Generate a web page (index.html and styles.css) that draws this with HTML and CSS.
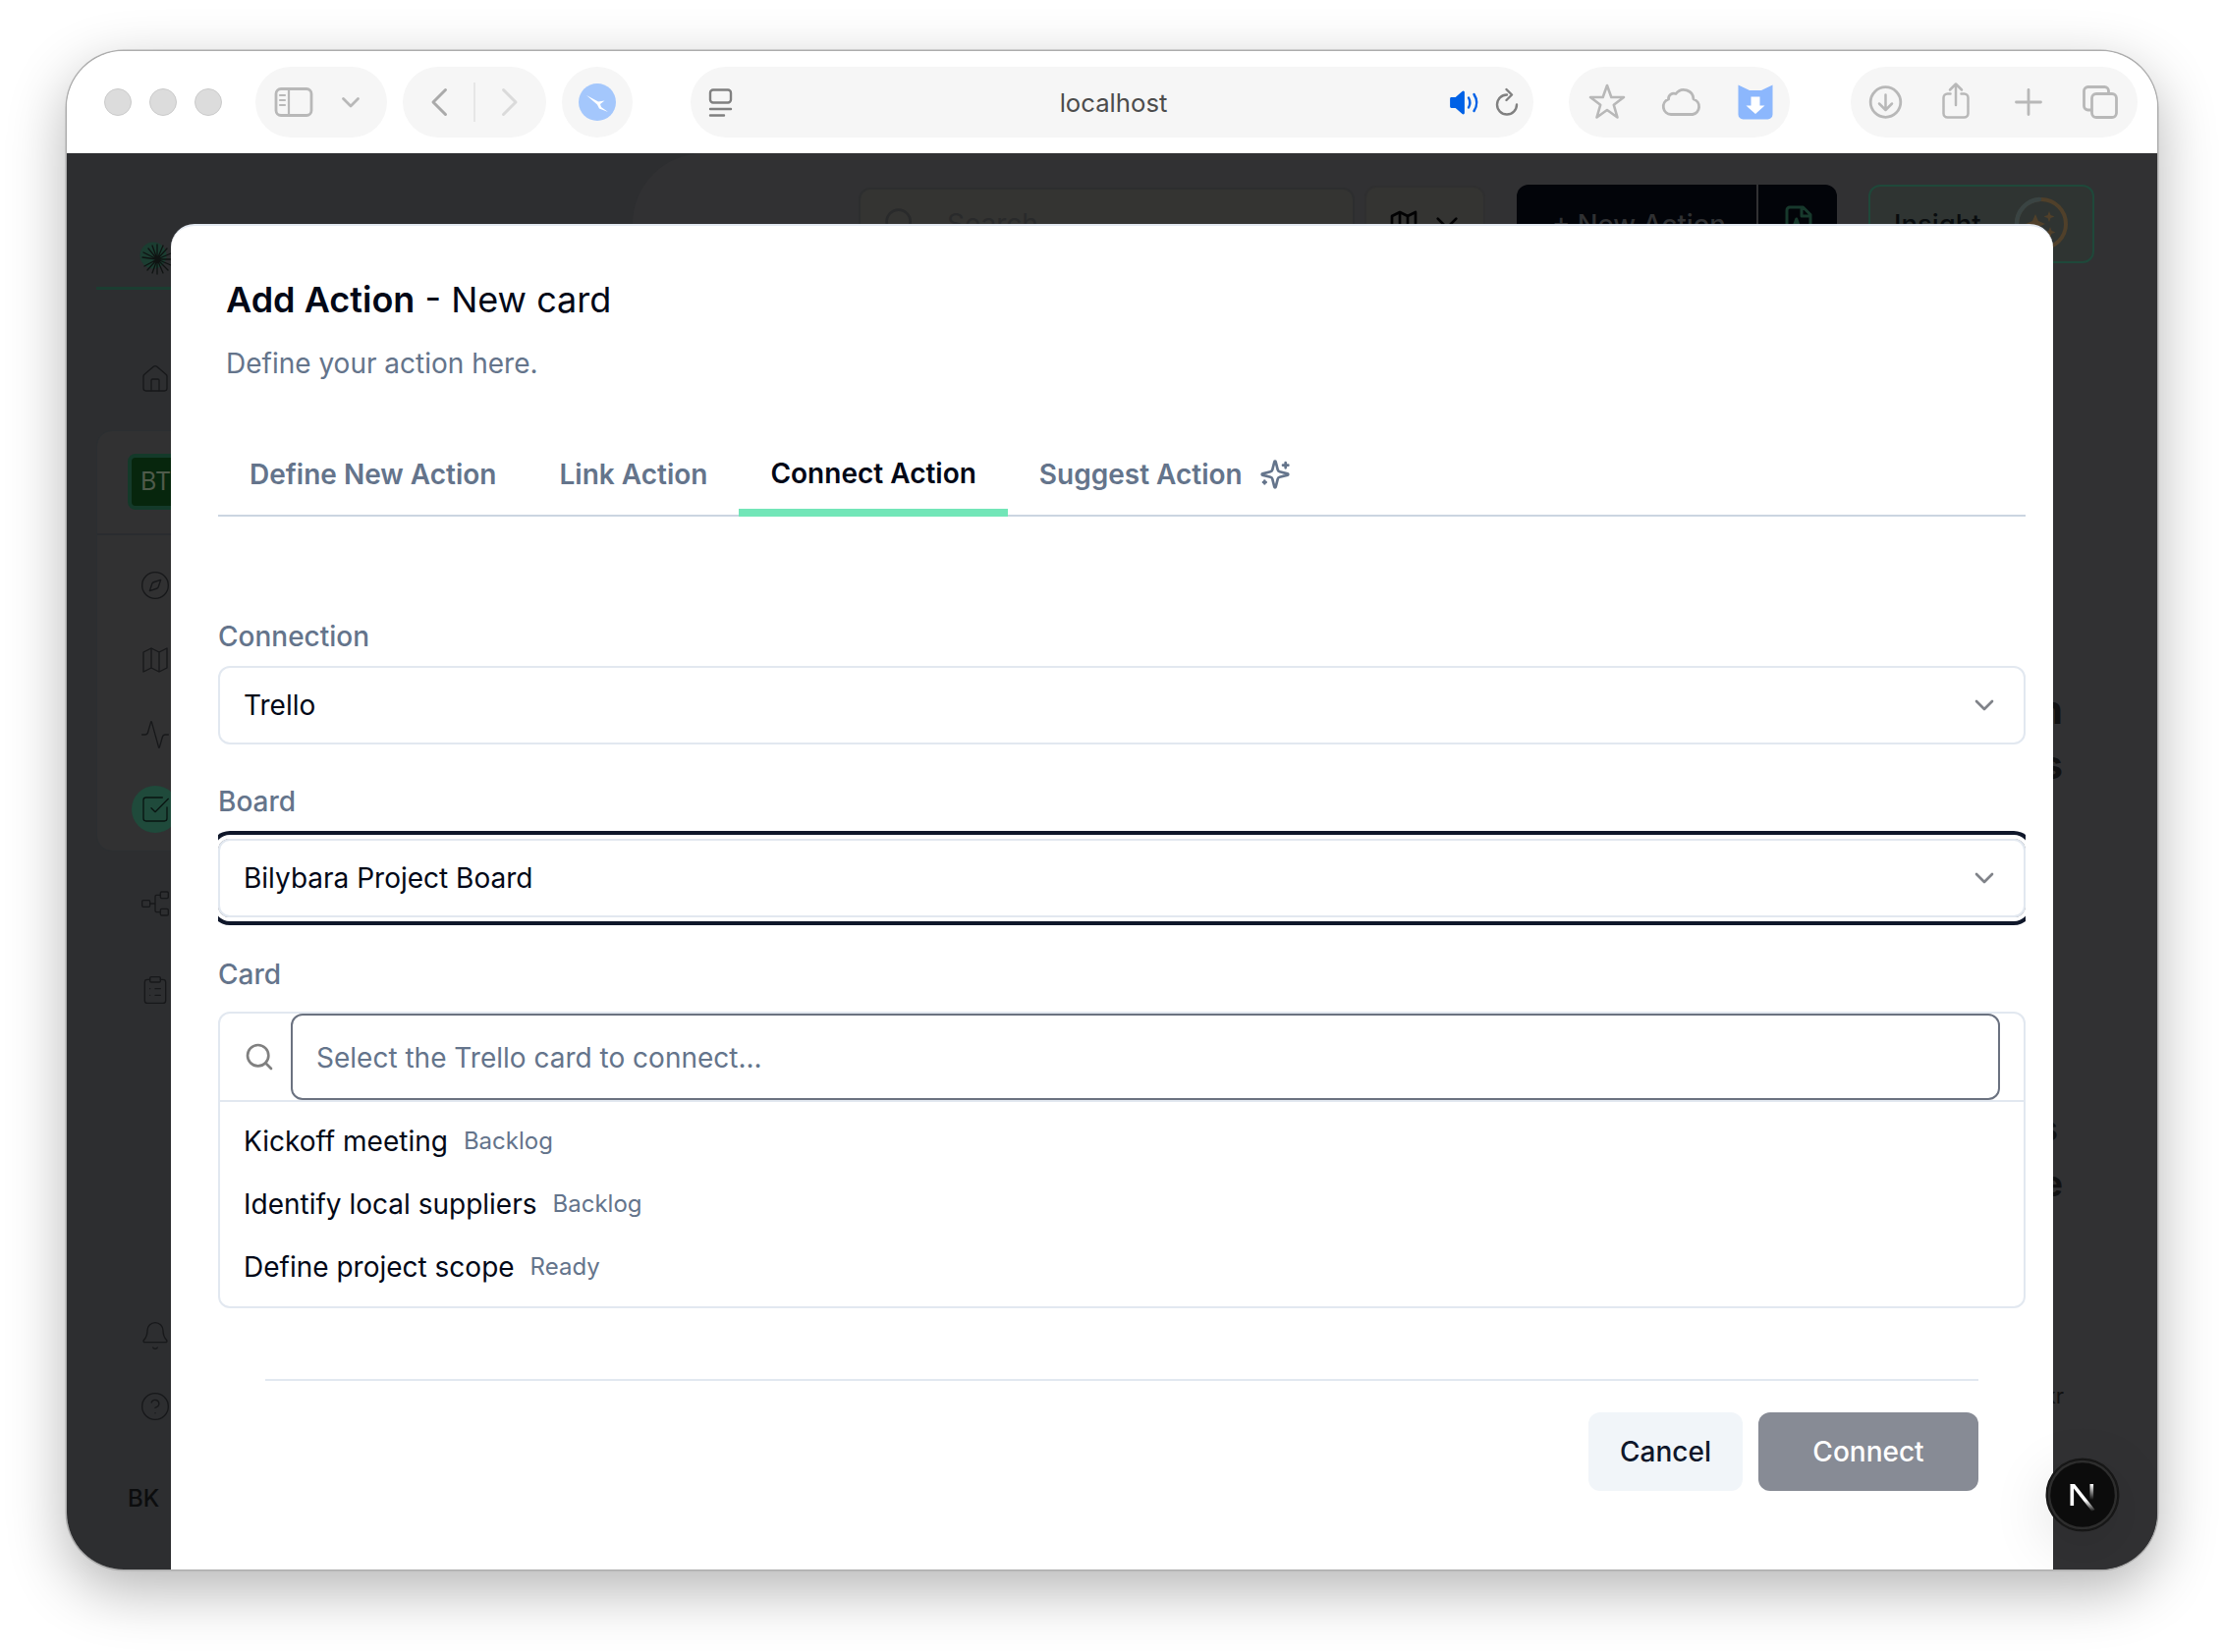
FILE: index.html
```html
<!DOCTYPE html>
<html lang="en">
  <head>
    <meta charset="UTF-8" />
    <meta name="viewport" content="width=device-width, initial-scale=1.0" />
    <title>Add Action</title>
    <link rel="stylesheet" href="styles.css">
  </head>
  <body>
    <div class="window">
      <div class="toolbar">
        <div class="lights"><span></span><span></span><span></span></div>

        <div class="pill pill-sidebar">
          <svg class="ti" viewBox="0 0 44 44"><rect x="4" y="8.5" width="36" height="27" rx="5" /><path d="M17 8.500V35.500M8 15h5M8 20h5M8 25h5" stroke-width="2.200" /></svg>
          <svg class="ti" viewBox="0 0 44 44"><path d="M14.500 18.500L22 26l7.500-7.500" /></svg>
        </div>

        <div class="pill pill-nav">
          <svg class="ti narrow dark" viewBox="0 0 28 44"><path d="M20.500 9.500L8 22l12.500 12.500" stroke-width="3" /></svg>
          <span class="nav-divider"></span>
          <svg class="ti narrow light" viewBox="0 0 28 44"><path d="M7.500 9.500L20 22 7.500 34.500" stroke-width="3" /></svg>
        </div>

        <div class="pill pill-ext">
          <svg class="ti" viewBox="0 0 44 44"><circle cx="22" cy="22" r="19" class="ext-bg" /><path class="ext-bird" d="M11 15l12 6.500 6.500-1-4.500 3.500 1 3 7 5-9-3.500-2-4z" /></svg>
        </div>

        <div class="pill pill-url">
          <div><svg class="ti gray" viewBox="0 0 44 44"><rect x="12" y="9.500" width="21" height="13" rx="3" /><path d="M12 29h21M12 35.500h14" /></svg></div>
          <span class="url">localhost</span>
          <div class="url-end">
            <svg class="ti blue" viewBox="0 0 44 44"><path class="fill" d="M9.500 18.500h4.500l7.500-6.500v21l-7.500-6.500H9.500z" /><path d="M27 17.500q2.800 5 0 10M32.500 14q5.500 8.500 0 17" stroke-width="2.400" /></svg>
            <svg class="ti gray" viewBox="0 0 44 44"><path d="M22 14.500a10 10 0 1 0 10 10M21.500 9l5.500 5.500-5.500 5.500" /></svg>
          </div>
        </div>

        <div class="pill pill-actions">
          <svg class="ti" viewBox="0 0 44 44"><path d="M22 5l4.300 12h12.700L28.800 24.800l3.700 12.700L22 30l-10.500 7.500 3.700-12.700L5 17h12.700z" stroke-width="2.600" /></svg>
          <svg class="ti" viewBox="0 0 44 44"><path d="M11 34.500a8 8 0 0 1-2.500-15.500 5.500 5.500 0 0 1 7.500-5.500A10 10 0 0 1 34 19a8 8 0 0 1-1 15.500z" /></svg>
          <svg class="ti" viewBox="0 0 44 44"><path class="dl-bg" d="M4.500 4.500l11.500 5.500h12l11.500-5.500v30a5 5 0 0 1-5 5h-25a5 5 0 0 1-5-5z" /><path class="dl-arrow" d="M17.500 16.500h9v9h5L22 34l-9.500-8.500h5z" /></svg>
        </div>

        <div class="pill pill-tabs">
          <svg class="ti" viewBox="0 0 44 44"><circle cx="22.500" cy="22" r="15.300" /><path d="M22.500 14.500v15M16 23.500L22.500 30l6.500-6.500" stroke-width="2.500" /></svg>
          <svg class="ti" viewBox="0 0 44 44"><path d="M15.500 13.500h-3a4 4 0 0 0-4 4V33.500a4 4 0 0 0 4 4h17a4 4 0 0 0 4-4V17.500a4 4 0 0 0-4-4h-3M21 25V4M15 9.500L21 3.500l6 6" stroke-width="2.500" /></svg>
          <svg class="ti" viewBox="0 0 44 44"><path d="M22 9.500v25M9.500 22h25" /></svg>
          <svg class="ti" viewBox="0 0 44 44"><rect x="13.500" y="13.500" width="25" height="24" rx="4.500" /><path d="M12.500 30h-3a4 4 0 0 1-4-4V10.500a4 4 0 0 1 4-4h17a4 4 0 0 1 4 4v2" /></svg>
        </div>
      </div>

      <div class="app">
        <aside class="sidebar">
          <div class="logo">
            <svg viewBox="0 0 40 40"><circle cx="18" cy="16" r="13.500" fill="#1b3d31" /><path d="M22 20L22 5M22 20L22 35M22 20L7 18M22 20L37 20M22 20L13 9M22 20L32 9M22 20L9 27M22 20L33 31M22 20L17 6M22 20L28 6M22 20L17 34M22 20L28 34M22 20L8 13M22 20L36 14M22 20L36 26M22 20L12 31" stroke="#0f1312" stroke-width="1.300" /></svg>
          </div>
          <div class="side-link home">
            <svg class="si" viewBox="0 0 24 24"><path d="M15 21v-8a1 1 0 0 0-1-1h-4a1 1 0 0 0-1 1v8" /><path d="M3 10a2 2 0 0 1 .7-1.500l7-6a2 2 0 0 1 2.600 0l7 6A2 2 0 0 1 21 10v9a2 2 0 0 1-2 2H5a2 2 0 0 1-2-2z" /></svg>
          </div>
          <div class="side-card">
            <div class="team"><span class="badge">BT</span></div>
            <div class="side-link">
              <svg class="si" viewBox="0 0 24 24"><circle cx="12" cy="12" r="10" /><path d="M16.240 7.760l-1.800 5.400a2 2 0 0 1-1.280 1.280l-5.400 1.800 1.800-5.400a2 2 0 0 1 1.280-1.280z" /></svg>
            </div>
            <div class="side-link">
              <svg class="si" viewBox="0 0 24 24"><path d="M3 6l6-3 6 3 6-3v15l-6 3-6-3-6 3zM9 3v15M15 6v15" /></svg>
            </div>
            <div class="side-link">
              <svg class="si" viewBox="0 0 24 24"><path d="M22 12h-2.500a2 2 0 0 0-1.900 1.500l-2.400 8.300a.25.25 0 0 1-.48 0L9.240 2.200a.25.25 0 0 0-.48 0l-2.400 8.300A2 2 0 0 1 4.500 12H2" /></svg>
            </div>
            <div class="side-link active">
              <svg class="si" viewBox="0 0 24 24"><path d="M21 10.500V19a2 2 0 0 1-2 2H5a2 2 0 0 1-2-2V5a2 2 0 0 1 2-2h12.500M9 11l3 3L22 4" /></svg>
            </div>
          </div>
          <div class="side-link flow">
            <svg class="si" viewBox="0 0 24 24"><rect x="16" y="16" width="6" height="5" rx="1" /><rect x="16" y="3" width="6" height="5" rx="1" /><rect x="2" y="9.500" width="6" height="5" rx="1" /><path d="M8 12h4M16 18.500h-3a1 1 0 0 1-1-1v-11a1 1 0 0 1 1-1h3" /></svg>
          </div>
          <div class="side-link clip">
            <svg class="si" viewBox="0 0 24 24"><rect x="8" y="2" width="8" height="4" rx="1" /><path d="M16 4h2a2 2 0 0 1 2 2v14a2 2 0 0 1-2 2H6a2 2 0 0 1-2-2V6a2 2 0 0 1 2-2h2M12 11h4M12 16h4M8 11h.01M8 16h.01" /></svg>
          </div>
          <div class="side-link bell">
            <svg class="si" viewBox="0 0 24 24"><path d="M10.300 21a2 2 0 0 0 3.400 0M3.260 15.330A1 1 0 0 0 4 17h16a1 1 0 0 0 .74-1.670C19.400 13.960 18 12.500 18 8A6 6 0 0 0 6 8c0 4.500-1.400 5.960-2.740 7.330" /></svg>
          </div>
          <div class="side-link help">
            <svg class="si" viewBox="0 0 24 24"><circle cx="12" cy="12" r="10" /><path d="M9.100 9a3 3 0 0 1 5.800 1c0 2-3 3-3 3M12 17h.01" /></svg>
          </div>
          <div class="user">BK</div>
        </aside>

        <main class="main">
          <div class="topbar">
            <div class="search">
              <svg class="si" viewBox="0 0 24 24"><circle cx="11" cy="11" r="9" /><path d="M21 21l-4.300-4.300" /></svg>
              <span>Search</span>
            </div>
            <div class="map-btn">
              <svg class="bi" viewBox="0 0 24 24"><path d="M3 6l6-3 6 3 6-3v15l-6 3-6-3-6 3zM9 3v15M15 6v15" /></svg>
              <svg class="bi" viewBox="0 0 24 24"><path d="M5 8l7 7 7-7" /></svg>
            </div>
            <div class="new-action"><span>+ New Action</span></div>
            <div class="new-file">
              <svg viewBox="0 0 24 24"><path d="M15 2H6a2 2 0 0 0-2 2v16a2 2 0 0 0 2 2h12a2 2 0 0 0 2-2V7zM14 2v6h6M8 17l2.500-7 2.500 7" /></svg>
            </div>
            <div class="insight">
              <span>Insight</span>
              <svg viewBox="0 0 56 56"><circle cx="28" cy="28" r="25" stroke="#50402a" stroke-width="4" fill="none" /><path d="M3 28A25 25 0 0 1 26 3" stroke="#3a4443" stroke-width="4.500" fill="none" /><path d="M22 18l3 7 7 3-7 3-3 7-3-7-7-3 7-3zM36 15l1.500 4 4 1.500-4 1.500-1.500 4-1.500-4-4-1.500 4-1.500zM37 31l1.500 4 4 1.500-4 1.500-1.500 4-1.500-4-4-1.500 4-1.500z" fill="#50402a" /></svg>
            </div>
          </div>
          <div class="column">
            <p class="big">Action plan</p>
            <p class="big">and reviews</p>
            <p class="mid">Suppliers</p>
            <p class="mid2">Resource</p>
            <p class="small">kr</p>
          </div>
        </main>

        <div class="modal">
          <h2><b>Add Action</b> - New card</h2>
          <p class="subtitle">Define your action here.</p>

          <div class="tabs">
            <div class="tab">Define New Action</div>
            <div class="tab">Link Action</div>
            <div class="tab active">Connect Action</div>
            <div class="tab">
              Suggest Action
              <svg viewBox="0 0 24 24"><path d="M9.940 15.500A2 2 0 0 0 8.500 14.060l-6.140-1.580a.5.5 0 0 1 0-.96L8.500 9.940A2 2 0 0 0 9.940 8.500l1.580-6.140a.5.5 0 0 1 .96 0L14.060 8.500A2 2 0 0 0 15.500 9.940l6.140 1.580a.5.5 0 0 1 0 .96L15.500 14.060a2 2 0 0 0-1.440 1.440l-1.580 6.140a.5.5 0 0 1-.96 0zM20 3v4M22 5h-4M4 17v2M5 18H3" /></svg>
            </div>
          </div>

          <div class="fields">
            <div class="label">Connection</div>
            <div class="select">
              Trello
              <svg viewBox="0 0 24 24"><path d="M6 9l6 6 6-6" /></svg>
            </div>

            <div class="label">Board</div>
            <div class="select focused">
              Bilybara Project Board
              <svg viewBox="0 0 24 24"><path d="M6 9l6 6 6-6" /></svg>
            </div>

            <div class="label label-card">Card</div>
            <div class="command">
              <div class="command-head">
                <svg viewBox="0 0 24 24"><circle cx="11" cy="11" r="8" /><path d="M21 21l-4.300-4.300" /></svg>
                <input type="text" placeholder="Select the Trello card to connect..." />
              </div>
              <div class="option">Kickoff meeting <span>Backlog</span></div>
              <div class="option">Identify local suppliers <span>Backlog</span></div>
              <div class="option">Define project scope <span>Ready</span></div>
            </div>
          </div>

          <div class="footer">
            <button class="btn cancel">Cancel</button>
            <button class="btn connect">Connect</button>
          </div>
        </div>

        <div class="dev-badge">
          <svg viewBox="0 0 76 76">
            <defs>
              <linearGradient id="diag" x1="0" y1="0" x2="0" y2="1"><stop offset="0.6" stop-color="#fff" /><stop offset="1" stop-color="#fff" stop-opacity="0" /></linearGradient>
              <linearGradient id="stem" x1="0" y1="0" x2="0" y2="1"><stop offset="0" stop-color="#fff" /><stop offset="1" stop-color="#fff" stop-opacity="0" /></linearGradient>
            </defs>
            <circle cx="38" cy="38" r="36.500" fill="#0c0c0c" stroke="#171717" stroke-width="2" />
            <circle cx="38" cy="38" r="34" fill="none" stroke="#2d2d2d" stroke-width="2.500" />
            <rect x="25.500" y="27" width="3.600" height="22" fill="#fff" />
            <polygon points="25.500,27 30,27 50.500,53 47.500,55" fill="url(#diag)" />
            <rect x="45.500" y="27" width="3.600" height="16" fill="url(#stem)" />
          </svg>
        </div>
      </div>
    </div>
  </body>
</html>
```
FILE: styles.css
```css
* {
  box-sizing: border-box;
}
body {
  margin: 0;
  padding: 52px 68px 0;
  height: 1682px;
  overflow: hidden;
  background-color: #fff;
  font-family: Inter, "Liberation Sans", sans-serif;
  font-size: 28px;
  color: #020817;
}
h2,
p {
  margin: 0;
}
svg {
  display: block;
  flex: none;
  fill: none;
  stroke-linecap: round;
  stroke-linejoin: round;
}
.window {
  width: 2128px;
  height: 1546px;
  border-radius: 58px;
  overflow: hidden;
  box-shadow: 0 0 0 1.5px #adadad, 0 20px 60px rgba(0, 0, 0, 0.3);
}

/* browser toolbar */
.toolbar {
  height: 104px;
  padding: 16px 20px 16px 38px;
  display: flex;
  background-color: #fff;
}
.lights {
  display: flex;
  align-items: center;
  gap: 18px;
  margin-right: 34px;
}
.lights span {
  width: 28px;
  height: 28px;
  border-radius: 50%;
  background-color: #dcdcdc;
  border: 1px solid #cacaca;
}
.pill {
  height: 72px;
  border-radius: 36px;
  background-color: #f6f6f6;
  display: flex;
  align-items: center;
  justify-content: space-between;
}
.ti {
  width: 44px;
  height: 44px;
  stroke: #b8b8b8;
  stroke-width: 2.8;
}
.ti.narrow {
  width: 28px;
}
.ti.dark {
  stroke: #aaa;
}
.ti.light {
  stroke: #dadada;
}
.ti.gray {
  stroke: #808080;
  stroke-width: 2.4;
}
.ti.blue {
  stroke: #0061e6;
}
.ti.blue .fill {
  fill: #0061e6;
}
.pill-sidebar {
  width: 134px;
  padding: 0 15px 0 17px;
  margin-right: 16px;
}
.pill-nav {
  width: 146px;
  padding: 0 23px;
  margin-right: 16px;
}
.nav-divider {
  width: 2px;
  height: 40px;
  background-color: #e6e6e6;
}
.pill-ext {
  width: 72px;
  justify-content: center;
  margin-right: 59px;
}
.ext-bg {
  fill: #a4c7fc;
  stroke: none;
}
.ext-bird {
  fill: #fff;
  stroke: none;
}
.pill-url {
  width: 858px;
  padding: 0 5px 0 8px;
  display: grid;
  grid-template-columns: 1fr auto 1fr;
  margin-right: 36px;
}
.url {
  font-size: 25.7px;
  color: #4c4c4c;
}
.url-end {
  display: flex;
  justify-content: flex-end;
}
.pill-actions {
  width: 225px;
  padding: 0 13px 0 17px;
  margin-right: 62px;
}
.dl-bg {
  fill: #8cb7fd;
  stroke: none;
}
.dl-arrow {
  fill: #fff;
  stroke: none;
}
.pill-tabs {
  width: 292px;
  padding: 0 16px 0 13px;
}

/* dimmed app */
.app {
  position: relative;
  height: 1442px;
  display: flex;
  background-color: #2d2e30;
}
.sidebar {
  width: 576px;
  padding: 88px 0 0 30px;
}
.si {
  width: 32px;
  height: 32px;
  stroke: #17181a;
  stroke-width: 1;
}
.logo {
  height: 51px;
  padding-left: 40px;
  border-bottom: 3px solid #1b3d31;
}
.logo svg {
  width: 40px;
  height: 40px;
}
.side-link {
  height: 76px;
  padding-left: 44px;
  display: flex;
  align-items: center;
}
.home {
  margin-top: 53px;
}
.side-card {
  margin-top: 14px;
  height: 429px;
  border-radius: 16px 0 0 16px;
  background-color: #313132;
  border: 1px solid #2b2e31;
}
.side-card .side-link {
  padding-left: 43px;
}
.team {
  height: 106px;
  padding: 23px 0 0 31px;
  border-bottom: 2px solid #2a2c2f;
  margin-bottom: 13px;
}
.badge {
  display: block;
  width: 57px;
  height: 57px;
  padding-left: 9px;
  line-height: 48px;
  border: 4px solid #143a2a;
  border-radius: 8px;
  background-color: #07260d;
  color: #4f5b4b;
  font-size: 25px;
}
.side-card .active::before {
  content: "";
  width: 48px;
  height: 48px;
  margin: 0 -40px 0 -8px;
  border-radius: 50%;
  background-color: #1f4a3b;
}
.side-link.active svg {
  position: relative;
  stroke: #0a1512;
}
.flow {
  margin-top: 15px;
}
.clip {
  margin-top: 12px;
}
.bell {
  margin-top: 276px;
}
.help {
  margin-top: -4px;
}
.user {
  margin-top: 41px;
  padding-left: 32px;
  font-size: 24px;
  line-height: 30px;
  font-weight: 500;
  color: #0c0d0e;
}
.main {
  flex: 1;
  padding-top: 32px;
  border-top-left-radius: 72px;
  background-color: #313133;
}
.topbar {
  display: flex;
  height: 80px;
  padding-left: 230px;
}
.search {
  width: 505px;
  padding: 18px 24px;
  margin: 3px 10px 0 0;
  display: flex;
  gap: 32px;
  border-radius: 12px;
  border: 2px solid #2d2e2f;
  background-color: #343432;
  color: #292a2b;
  font-size: 28px;
}
.search .si {
  stroke: #292a2b;
  stroke-width: 2;
}
.map-btn {
  width: 123px;
  margin: 1px 32px 0 0;
  display: flex;
  gap: 12px;
  padding: 21px 22px;
  border-radius: 12px;
  border: 2px solid #2f2f30;
  background-color: #343432;
}
.bi {
  width: 32px;
  height: 32px;
  stroke: #020203;
  stroke-width: 2;
}
.new-action {
  width: 246px;
  padding: 23px 0 0 36px;
  border-radius: 12px 0 0 12px;
  background-color: #020409;
  border-right: 2px solid #313133;
  color: #303133;
  font-size: 27.500px;
  font-weight: 500;
}
.new-file {
  width: 80px;
  margin-right: 32px;
  padding: 20px 0 0 23px;
  border-radius: 0 12px 12px 0;
  background-color: #020409;
}
.new-file svg {
  width: 36px;
  height: 36px;
  stroke: #17392c;
  stroke-width: 2;
}
.insight {
  width: 230px;
  display: flex;
  align-items: center;
  justify-content: space-between;
  padding: 0 24px;
  border: 2px solid #1f483a;
  border-radius: 12px;
  background-color: #2f3432;
  color: #090c0e;
  font-size: 27.500px;
  font-weight: 500;
}
.insight svg {
  width: 56px;
  height: 56px;
}
.column {
  width: 1458px;
  padding-top: 427px;
  text-align: right;
  color: #111112;
  font-weight: 700;
}
.column p {
  padding-right: 2px;
}
.big {
  font-size: 40px;
  line-height: 56px;
}
.mid {
  font-size: 36px;
  line-height: 56px;
  margin-top: 314px;
}
.column .mid {
  padding-right: 7px;
}
.mid2 {
  font-size: 36px;
  line-height: 56px;
}
.column .small {
  padding-right: 1px;
  margin-top: 168px;
  font-size: 22px;
  line-height: 40px;
  font-weight: 400;
}

/* dialog */
.modal {
  position: absolute;
  left: 106px;
  top: 72px;
  width: 1916px;
  height: 1370px;
  padding: 50px 28px 0 48px;
  border-radius: 24px 24px 0 0;
  border-top: 2px solid #e2e8f0;
  background-color: #fff;
}
.modal h2 {
  padding-left: 8px;
  font-size: 36px;
  line-height: 50px;
  font-weight: 400;
}
.modal h2 b {
  font-weight: 600;
}
.subtitle {
  margin-top: 20px;
  padding-left: 8px;
  line-height: 40px;
  color: #64748b;
}
.tabs {
  display: flex;
  height: 80px;
  margin-top: 56px;
  border-bottom: 2px solid #cbd5e1;
  font-weight: 600;
  color: #64748b;
}
.tab {
  display: flex;
  align-items: center;
  gap: 17px;
  height: 80px;
  padding: 0 32px 6px;
}
.tab.active {
  padding-bottom: 1px;
  border-bottom: 8px solid #72e6b8;
  color: #020817;
}
.tab svg {
  width: 32px;
  height: 32px;
  stroke: #64748b;
  stroke-width: 2;
}
.fields {
  overflow: hidden;
  padding-top: 102px;
}
.label {
  line-height: 40px;
  margin-bottom: 10px;
  font-weight: 500;
  color: #64748b;
}
.select {
  height: 80px;
  padding: 0 24px;
  margin-bottom: 38px;
  display: flex;
  align-items: center;
  justify-content: space-between;
  border: 2px solid #e2e8f0;
  border-radius: 12px;
}
.select svg {
  width: 32px;
  height: 32px;
  stroke: #808389;
  stroke-width: 2;
}
.select.focused {
  margin-top: 18px;
  box-shadow: 0 0 0 4px #fff, 0 0 0 8px #0f172a;
}
.label-card {
  margin-bottom: 18px;
}
.command {
  height: 302px;
  border: 2px solid #e2e8f0;
  border-radius: 12px;
}
.command-head {
  height: 90px;
  margin-bottom: 8px;
  padding: 0 24px;
  display: flex;
  align-items: center;
  gap: 16px;
  border-bottom: 2px solid #e2e8f0;
}
.command-head svg {
  width: 32px;
  height: 32px;
  stroke: #808080;
  stroke-width: 2;
}
.command-head input {
  flex: 1;
  height: 88px;
  padding: 2px 24px 0;
  border: 2px solid #6b7280;
  border-radius: 12px;
  outline: none;
  font: inherit;
}
.command-head input::placeholder {
  color: #64748b;
}
.option {
  height: 64px;
  padding: 0 24px;
  display: flex;
  align-items: center;
  gap: 16px;
}
.option span {
  padding-bottom: 1px;
  font-size: 24px;
  color: #64748b;
}
.footer {
  margin: 72px 48px 0;
  padding-top: 32px;
  display: flex;
  justify-content: flex-end;
  gap: 16px;
  border-top: 2px solid #e2e8f0;
}
.btn {
  height: 80px;
  padding: 0 32px;
  border: none;
  border-radius: 12px;
  font: inherit;
  font-weight: 500;
}
.cancel {
  background-color: #f1f5f9;
  color: #0f172a;
}
.connect {
  width: 224px;
  background-color: #878b95;
  color: #fff;
}
.dev-badge {
  position: absolute;
  left: 2014px;
  top: 1328px;
  width: 76px;
  height: 76px;
  border-radius: 50%;
  box-shadow: 0 16px 60px rgba(0, 0, 0, 0.12);
}
```
